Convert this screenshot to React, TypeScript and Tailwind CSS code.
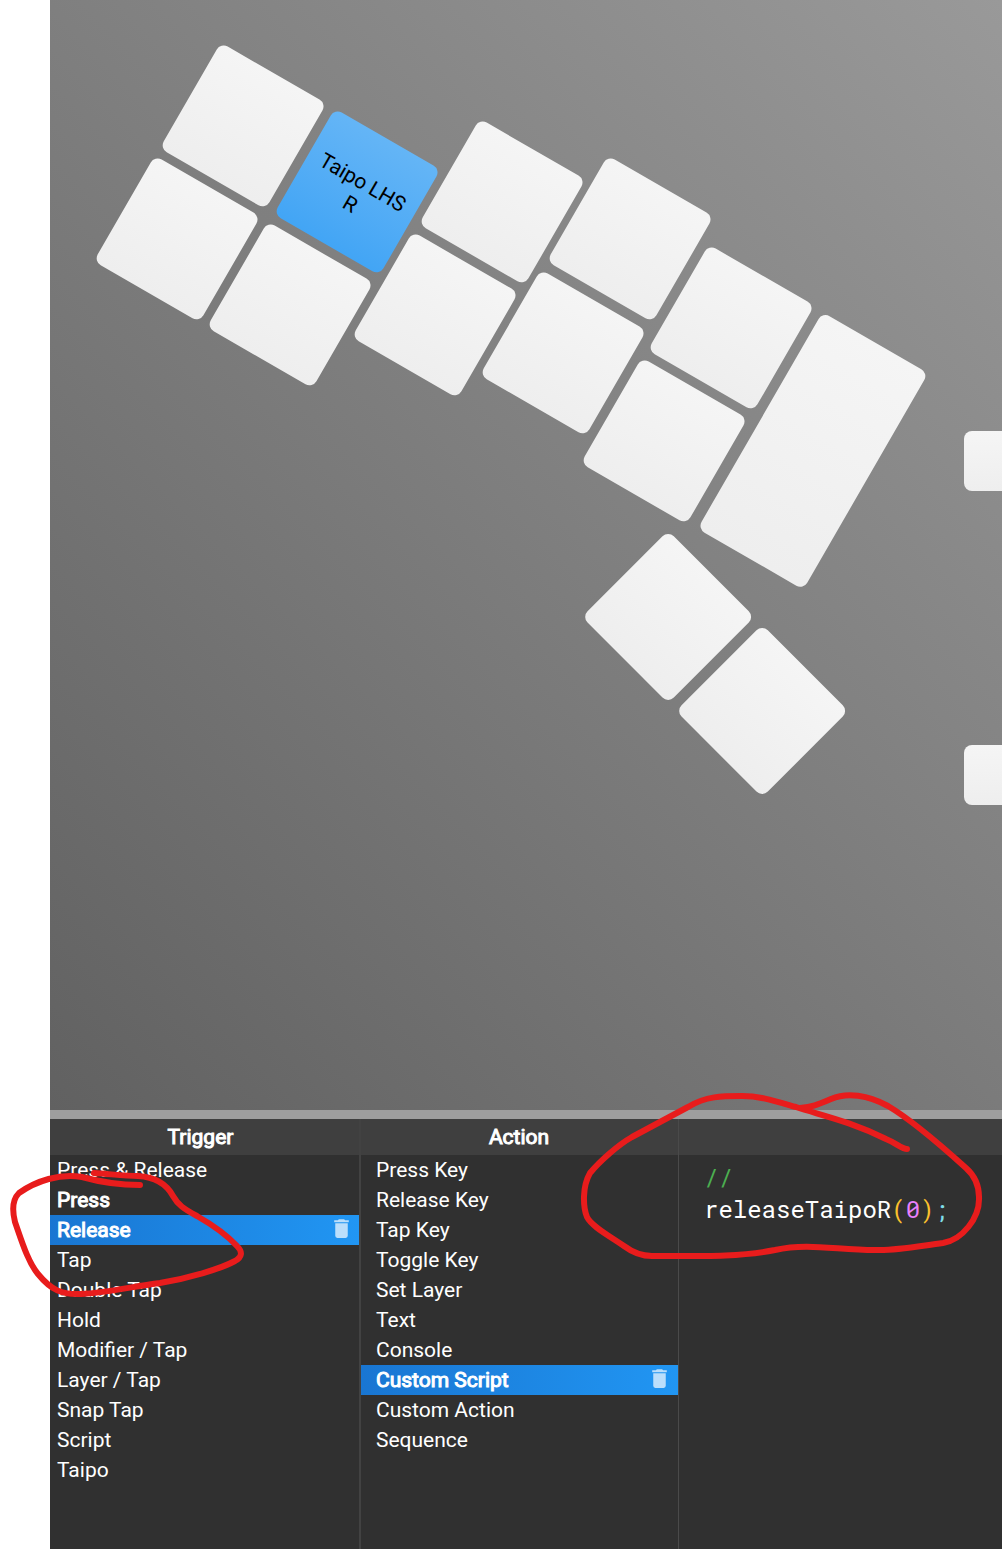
type Key = { cx: number; cy: number; h?: number; w?: number; rot?: number; label?: string; active?: boolean };

const keys: Key[] = [
  { cx: 193.5, cy: 126.2, rot: 30 },
  { cx: 306.7, cy: 191.9, rot: 30, label: "Taipo LHS R", active: true },
  { cx: 451.7, cy: 202, rot: 30 },
  { cx: 580.3, cy: 239.6, rot: 30 },
  { cx: 681, cy: 328, rot: 30 },
  { cx: 126.8, cy: 239.6, rot: 30 },
  { cx: 240.2, cy: 305.1, rot: 30 },
  { cx: 385.1, cy: 315.3, rot: 30 },
  { cx: 513.6, cy: 353, rot: 30 },
  { cx: 614.2, cy: 441.2, rot: 30 },
  { cx: 763, cy: 451.2, h: 249.6, rot: 30 },
  { cx: 618.5, cy: 617.3, rot: 45 },
  { cx: 711.8, cy: 710.7, rot: 45 },
  { cx: 975.5, cy: 460.5, h: 60 },
  { cx: 975.5, cy: 775.3, h: 60 },
];

const triggers = ["Press & Release", "Press", "Release", "Tap", "Double Tap", "Hold", "Modifier / Tap", "Layer / Tap", "Snap Tap", "Script", "Taipo"];
const actions = ["Press Key", "Release Key", "Tap Key", "Toggle Key", "Set Layer", "Text", "Console", "Custom Script", "Custom Action", "Sequence"];

function Keycap({ cx, cy, w = 122.3, h = 122.3, rot = 0, label, active }: Key) {
  return (
    <div
      className={
        "absolute flex justify-center rounded-[8px] pt-[38px] text-center text-[21px] leading-[24.5px] text-black " +
        (active ? "bg-linear-to-b from-[#64b5f6] to-[#42a5f5]" : "bg-linear-to-b from-[#f5f5f5] to-[#eeeeee]")
      }
      style={{ left: cx - w / 2, top: cy - h / 2, width: w, height: h, transform: `rotate(${rot}deg)` }}
    >
      {label && <span className="w-[100px]">{label}</span>}
    </div>
  );
}

function Trash() {
  return (
    <svg viewBox="0 0 24 24" className="mb-[4px] h-[25px] w-[25px] fill-[#bbdefb]">
      <path d="M19 4h-3.5l-1-1h-5l-1 1H5v2h14M6 19a2 2 0 0 0 2 2h8a2 2 0 0 0 2-2V7H6v12Z" />
    </svg>
  );
}

type ColumnProps = { title: string; items: string[]; bold: string[]; selected: string; pad: string; headPad: string };

function Column({ title, items, bold, selected, pad, headPad }: ColumnProps) {
  return (
    <>
      <h2 className={"flex h-9 items-center justify-center bg-[#3f3f3f] pt-[2px] text-[21px] [-webkit-text-stroke:1px_white] " + headPad}>
        {title}
      </h2>
      <ul>
        {items.map((item) => (
          <li
            key={item}
            className={
              "flex h-[30px] items-center justify-between text-[21px] " + pad +
              (item === selected ? " bg-linear-to-r from-[#1976d2] to-[#2196f3]" : "")
            }
          >
            <span className={bold.includes(item) ? "pt-[2px] [-webkit-text-stroke:1px_white]" : "pt-[2px]"}>{item}</span>
            {item === selected && <Trash />}
          </li>
        ))}
      </ul>
    </>
  );
}

export default function App() {
  return (
    <div className="relative flex h-[1549px] w-[1002px] overflow-hidden bg-white pl-[50px] font-['Roboto',sans-serif] text-white">
      <div className="flex min-w-0 flex-1 flex-col bg-[#303030]">
        <div className="relative h-[1110px] overflow-hidden bg-linear-[45deg] from-[#616161] to-[#999999]">
          {keys.map((k, i) => (
            <Keycap key={i} {...k} />
          ))}
        </div>
        <div className="h-[9px] bg-[#9e9e9e]" />
        <div className="flex min-h-0 flex-1">
          <section className="w-[311px] border-r-2 border-[#424242]">
            <Column title="Trigger" items={triggers} bold={["Press", "Release"]} selected="Release" pad="pl-[7px] pr-[5px]" headPad="pr-[8px]" />
          </section>
          <section className="w-[318px] border-r border-[#4a4a4a]">
            <Column title="Action" items={actions} bold={["Custom Script"]} selected="Custom Script" pad="pl-[15px] pr-[6px]" headPad="pr-[1px]" />
          </section>
          <section className="flex-1">
            <div className="h-9 bg-[#3f3f3f]" />
            <pre className="pt-[6px] pl-[25px] font-['Roboto_Mono','DejaVu_Sans_Mono',monospace] text-[24px] leading-8">
              <span className="text-[#4caf50]">//</span>
              {"\n"}releaseTaipoR<span className="text-[#fbc02d]">(</span>
              <span className="text-[#ea80fc]">0</span>
              <span className="text-[#fbc02d]">)</span>
              <span className="text-[#80deea]">;</span>
            </pre>
          </section>
        </div>
      </div>
      <svg
        viewBox="0 0 1002 1549"
        className="pointer-events-none absolute inset-0 h-full w-full fill-none stroke-[#e81c1c] stroke-6 [stroke-linecap:round] [stroke-linejoin:round]"
      >
        <path d="M140 1185C120 1185 100 1182 82 1177C60 1173 36 1181 19 1193C12 1200 12 1210 15 1222C22 1242 28 1262 38 1274C51 1290 62 1295 81 1294C105 1293 130 1287 160 1283C190 1278 220 1269 235 1261C242 1257 243 1252 237 1246C225 1233 211 1224 197 1216C184 1209 178 1205 173 1196C166 1183 155 1177 138 1176C125 1176 110 1174 94 1173" />
        <path d="M907 1149C902 1149 896 1143 886 1139C850 1121 820 1115 796 1107C775 1101 760 1096 742 1096C722 1096 706 1096 688 1107L632 1137C618 1145 600 1161 590 1173C582 1187 583 1207 587 1217C592 1227 610 1236 624 1246C632 1252 640 1256 652 1256C700 1256 740 1257 775 1250C810 1242 840 1251 880 1250C900 1250 920 1246 943 1243C962 1240 980 1218 979 1197C979 1185 975 1176 966 1168C945 1149 910 1119 888 1106C868 1095 847 1092 831 1099C817 1105 812 1107 800 1108" />
      </svg>
    </div>
  );
}
